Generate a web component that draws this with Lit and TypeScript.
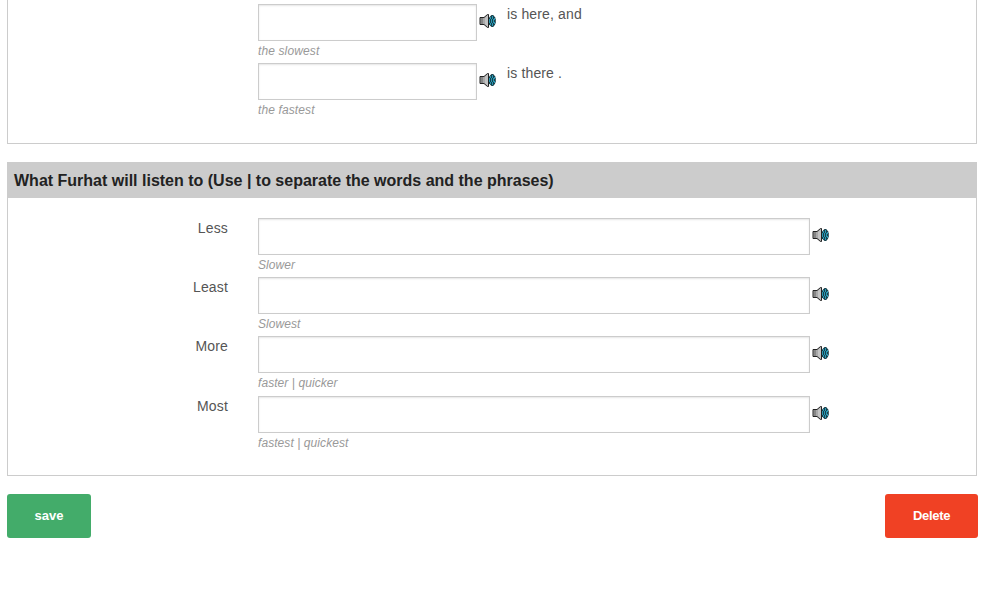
import { LitElement, html, css } from "lit";
import { customElement } from "lit/decorators.js";

interface Field {
  label: string;
  hint: string;
  after?: string;
}

const SPOKEN: Field[] = [
  { label: "", hint: "the slowest", after: "is here, and" },
  { label: "", hint: "the fastest", after: "is there ." },
];

const HEARD: Field[] = [
  { label: "Less", hint: "Slower" },
  { label: "Least", hint: "Slowest" },
  { label: "More", hint: "faster | quicker" },
  { label: "Most", hint: "fastest | quickest" },
];

const speaker = () => html`
  <svg class="speaker" width="17" height="14" viewBox="0 0 17 14" aria-hidden="true">
    <path fill="#a9a9a9" stroke="#222" d="M1 3.5h4L8.5 .5h1v13h-1L5 10.5H1z" />
    <path fill="#858585" d="M2 4h2v6H2z" />
    <path fill="#c4c4c4" d="M6 4l2-2h1v10H8L6 10z" />
    <path fill="#17404c" d="M10 3.5 12.5 1h1.7L16 3.2l.8 2.3v3L16 10.8 14.2 13h-1.7L10 10.5z" />
    <path
      fill="#2799b4"
      shape-rendering="crispEdges"
      d="M10 5h1v4h-1zM11 3h1v2h-1zM11 9h1v2h-1zM12 5h1v4h-1zM13 2h1v3h-1zM13 9h1v3h-1zM14 5h1v4h-1zM15 4h1v2h-1zM15 8h1v2h-1z"
    />
  </svg>
`;

@customElement("app-root")
export class AppRoot extends LitElement {
  static styles = css`
    :host {
      display: block;
      box-sizing: border-box;
      height: 592px;
      overflow: hidden;
      padding: 0 10px 0 7px;
      background: #fff;
      color: #555;
      font: 14px/20px "Liberation Sans", Arial, sans-serif;
    }
    .panel {
      box-sizing: border-box;
      width: 970px;
      border: 1px solid #ccc;
      margin-bottom: 18px;
    }
    .spoken {
      height: 144px;
      border-top: 0;
      padding-top: 4px;
    }
    .heard {
      height: 314px;
    }
    .title {
      box-sizing: border-box;
      height: 35px;
      margin: 0 0 20px;
      padding: 0 6px;
      background: #ccc;
      color: #222;
      font-size: 16px;
      font-weight: bold;
      line-height: 35px;
    }
    .row {
      display: grid;
      grid-template-columns: 220px auto 17px 1fr;
      height: 59px;
    }
    .heard .row:nth-child(4) {
      height: 60px;
    }
    .label {
      text-align: right;
      letter-spacing: 0.15px;
    }
    .field {
      margin-left: 30px;
    }
    input {
      display: block;
      box-sizing: border-box;
      width: 552px;
      height: 37px;
      margin: 0;
      border: 1px solid #ccc;
      border-radius: 0;
      background: #fff;
      box-shadow: inset 0 1px 2px rgba(0, 0, 0, 0.1);
      outline: none;
    }
    .spoken input {
      width: 219px;
    }
    .hint {
      color: #999;
      font-size: 12px;
      font-style: italic;
      line-height: 20px;
      letter-spacing: 0.07px;
    }
    .spoken .hint {
      letter-spacing: 0.12px;
    }
    .speaker {
      display: block;
      margin: 10px 0 0 2px;
    }
    .after {
      margin-left: 13px;
      letter-spacing: 0.14px;
    }
    .actions {
      display: flex;
      justify-content: space-between;
      width: 971px;
    }
    button {
      width: 84px;
      height: 44px;
      padding: 0 0 2px;
      border: 0;
      border-radius: 3px;
      background: #43ac6a;
      color: #fff;
      font: bold 13px "Liberation Sans", Arial, sans-serif;
    }
    .delete {
      width: 93px;
      background: #f04124;
      letter-spacing: -0.3px;
    }
  `;

  private row(f: Field) {
    return html`
      <div class="row">
        <div class="label">${f.label}</div>
        <div class="field">
          <input type="text" />
          <div class="hint">${f.hint}</div>
        </div>
        ${speaker()}
        <div class="after">${f.after ?? ""}</div>
      </div>
    `;
  }

  render() {
    return html`
      <section class="panel spoken">${SPOKEN.map((f) => this.row(f))}</section>
      <section class="panel heard">
        <h2 class="title">What Furhat will listen to (Use | to separate the words and the phrases)</h2>
        ${HEARD.map((f) => this.row(f))}
      </section>
      <div class="actions">
        <button class="save">save</button>
        <button class="delete">Delete</button>
      </div>
    `;
  }
}
